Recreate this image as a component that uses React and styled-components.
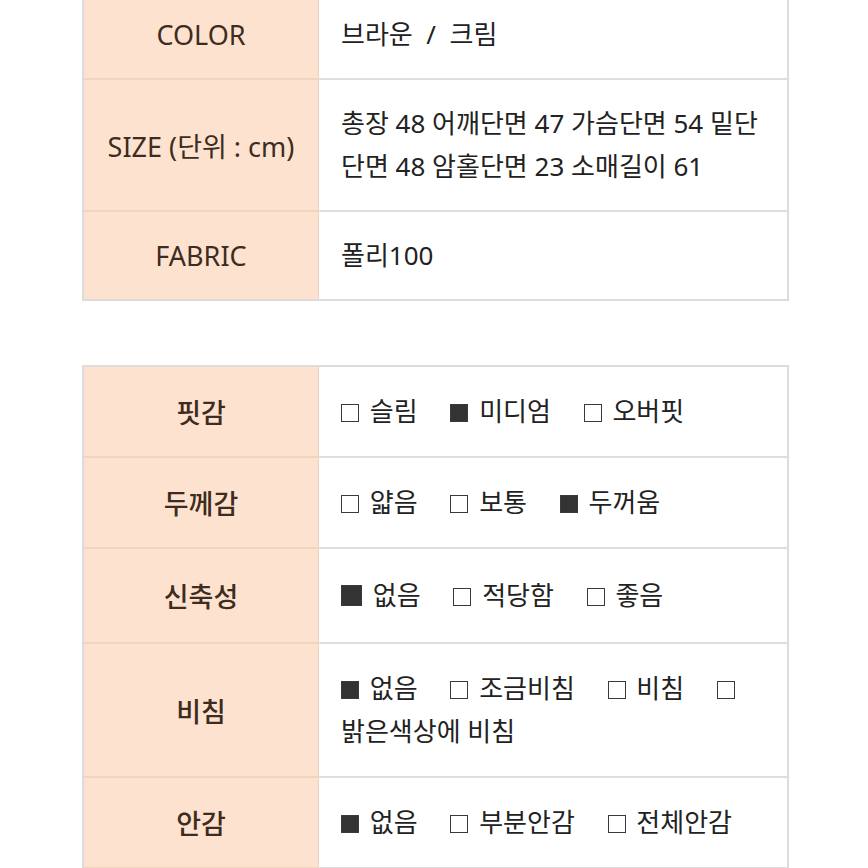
import React from 'react';
import styled, { createGlobalStyle } from 'styled-components';

const GlobalStyle = createGlobalStyle`
    html, body {
        margin: 0;
        padding: 0;
        background: #ffffff;
        overflow: hidden;
    }
    body {
        font-family: "Noto Sans", "Noto Sans CJK KR", sans-serif;
    }
`;

const StyledPage = styled.main`
    width: 868px;
    height: 868px;
    overflow: hidden;
    display: flex;
    flex-direction: column;
    align-items: center;
    gap: 64px;
`;

const StyledTable = styled.section`
    width: 707px;
    margin-left: 3px;
    margin-top: ${props => props.$offset || 0}px;
    border: 2px solid #dcdcdc;
    box-sizing: border-box;
    display: flex;
    flex-direction: column;
    flex-shrink: 0;
`;

const StyledRow = styled.div`
    display: grid;
    grid-template-columns: 235px 1fr;
    & + & > div:first-child {
        border-top: 2px solid #f1d5c1;
    }
    & + & > div:last-child {
        border-top: 2px solid #dedede;
    }
`;

const StyledLabel = styled.div`
    background: #fde3cf;
    color: #3e2c20;
    font-size: 27px;
    font-weight: ${props => (props.$bold ? 500 : 400)};
    display: flex;
    align-items: center;
    justify-content: center;
    border-right: 1px solid #ead3c2;
`;

const StyledValue = styled.div`
    background: #ffffff;
    color: #222222;
    font-size: 26px;
    line-height: 43px;
    word-break: keep-all;
    padding: ${props => props.$pad}px 18px ${props => props.$pad}px 22px;
    min-height: 43px;
`;

const StyledBox = styled.span`
    display: inline-block;
    width: ${props => props.$size || 18}px;
    height: ${props => props.$size || 18}px;
    box-sizing: border-box;
    border: 1.5px solid #3a3a3a;
    background: ${props => (props.$checked ? '#333333' : '#ffffff')};
    vertical-align: -1px;
    margin-right: 4px;
`;

const StyledOption = styled.span`
    margin-right: 26px;
    &:last-child {
        margin-right: 0;
    }
`;

const specRows = [
    { label: 'COLOR', value: '브라운 \u00a0/\u00a0 크림' },
    { label: 'SIZE (단위 : cm)', value: '총장 48 어깨단면 47 가슴단면 54 밑단 단면 48 암홀단면 23 소매길이 61' },
    { label: 'FABRIC', value: '폴리100' },
];

const feelRows = [
    { label: '핏감', options: [[false, '슬림'], [true, '미디엄'], [false, '오버핏']] },
    { label: '두께감', options: [[false, '얇음'], [false, '보통'], [true, '두꺼움']] },
    { label: '신축성', options: [[true, '없음', 21], [false, '적당함'], [false, '좋음']], pad: 25 },
    { label: '비침', options: [[true, '없음'], [false, '조금비침'], [false, '비침'], [false, '밝은색상에 비침']] },
    { label: '안감', options: [[true, '없음'], [false, '부분안감'], [false, '전체안감']] },
    { label: '', options: [] },
];

function App() {
    return (
        <>
            <GlobalStyle />
            <StyledPage>
                <StyledTable $offset={-11}>
                    {specRows.map(row => (
                        <StyledRow key={row.label}>
                            <StyledLabel>{row.label}</StyledLabel>
                            <StyledValue $pad={22}>{row.value}</StyledValue>
                        </StyledRow>
                    ))}
                </StyledTable>
                <StyledTable>
                    {feelRows.map((row, i) => (
                        <StyledRow key={i}>
                            <StyledLabel $bold>{row.label}</StyledLabel>
                            <StyledValue $pad={row.pad || 23}>
                                {row.options.map(([checked, text, size]) => (
                                    <React.Fragment key={text}>
                                        <StyledOption>
                                            <StyledBox $checked={checked} $size={size} /> {text}
                                        </StyledOption>{' '}
                                    </React.Fragment>
                                ))}
                            </StyledValue>
                        </StyledRow>
                    ))}
                </StyledTable>
            </StyledPage>
        </>
    );
}

export default App;
